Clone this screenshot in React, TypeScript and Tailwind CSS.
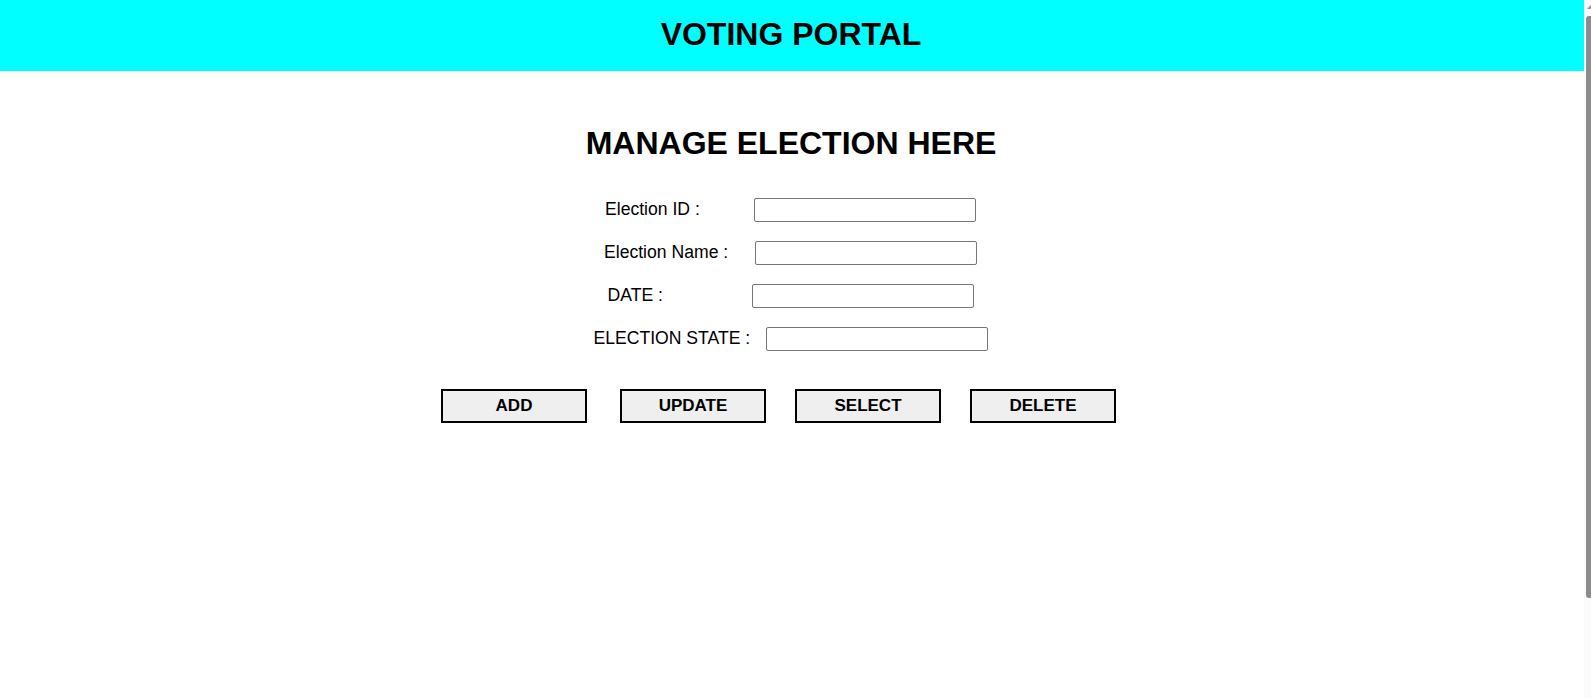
const fields = [
    { label: 'Election ID :', labelWidth: 'w-[149px]' },
    { label: 'Election Name :', labelWidth: 'w-[151px]' },
    { label: 'DATE :', labelWidth: 'w-[144px]' },
    { label: 'ELECTION STATE :', labelWidth: 'w-[172px]' },
];

const actions = [
    { label: 'ADD', margin: '' },
    { label: 'UPDATE', margin: 'ml-[33px]' },
    { label: 'SELECT', margin: 'ml-[29px]' },
    { label: 'DELETE', margin: 'ml-[29px]' },
];

function FakeScrollbar() {
    return (
        <aside className="flex w-[7px] shrink-0 flex-col bg-[#fbfbfb]">
            <svg width="7" height="16" viewBox="0 0 7 16" className="block">
                <path d="M3 9 L7 4.5 L7 9 Z" fill="#9a9a9a" />
            </svg>
            <div className="ml-[2px] h-[582px] rounded-l-[3px] bg-[#8b8b8b]" />
        </aside>
    );
}

export default function App() {
    return (
        <div className="flex h-[698px] overflow-hidden bg-white font-['Liberation_Sans',Arial,sans-serif] text-black">
            <main className="flex-1">
                <header className="h-[71px] bg-[#00ffff] pr-[2px] pt-[16px] text-center">
                    <h1 className="text-[32px] font-bold leading-[37px]">
                        VOTING PORTAL
                    </h1>
                </header>

                <h2 className="mt-[54px] pr-[2px] text-center text-[32px] font-bold leading-[37px]">
                    MANAGE ELECTION HERE
                </h2>

                <form className="mt-[36px] flex flex-col gap-[19px] pr-[3px]">
                    {fields.map((field) => (
                        <div
                            key={field.label}
                            className="flex h-[24px] items-center justify-center"
                        >
                            <label
                                className={`${field.labelWidth} pb-[2px] text-[17.6px] leading-normal`}
                            >
                                {field.label}
                            </label>
                            <input
                                type="text"
                                className="h-[24px] w-[222px] rounded-[2px] border border-[#767676] bg-white"
                            />
                        </div>
                    ))}
                </form>

                <div className="mt-[38px] flex pl-[441px]">
                    {actions.map((action) => (
                        <button
                            key={action.label}
                            type="button"
                            className={`${action.margin} h-[34px] w-[146px] border-2 border-black bg-[#efefef] pb-[2px] text-[17px] font-bold leading-none`}
                        >
                            {action.label}
                        </button>
                    ))}
                </div>
            </main>
            <FakeScrollbar />
        </div>
    );
}
